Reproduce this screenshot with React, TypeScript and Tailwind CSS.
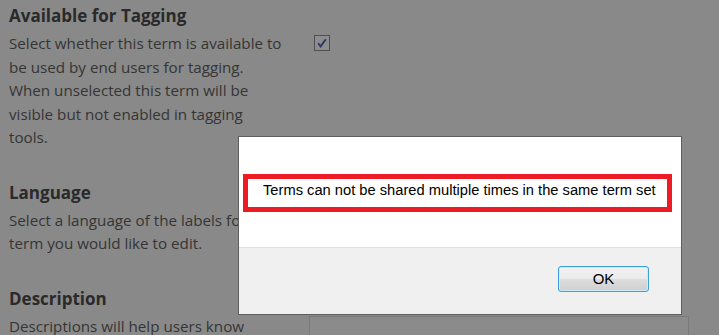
import React from "react";

const Line = ({ children }: { children: React.ReactNode }) => (
  <div className="h-[23.5px] leading-[23.5px] whitespace-nowrap">{children}</div>
);

export default function App() {
  return (
    <div className="relative w-[719px] h-[335px] overflow-hidden bg-[#898989] font-['Open_Sans',sans-serif] text-[#353535]">
      <div className="flex flex-col pl-[9px] pt-[4px]">
        {/* Section 1 */}
        <section className="flex flex-col">
          <h2 className="h-[24px] leading-[24px] text-[17px] font-bold text-[#2a2a2a] whitespace-nowrap">
            Available for Tagging
          </h2>
          <div className="mt-[4px] flex">
            <div className="w-[300px] text-[15.2px]">
              <Line>Select whether this term is available to</Line>
              <Line>be used by end users for tagging.</Line>
              <Line>When unselected this term will be</Line>
              <Line>visible but not enabled in tagging</Line>
              <Line>tools.</Line>
            </div>
            <div className="pl-[5px] pt-[3px]">
              <div className="w-[16px] h-[16px] border border-[#4f4f4f] bg-[#8d8d8d] flex items-center justify-center">
                <svg width="12" height="12" viewBox="0 0 12 12">
                  <path d="M2.2 6.2 L4.6 9.4 L9.8 2.2" fill="none" stroke="#2c3566" strokeWidth="1.8" />
                </svg>
              </div>
            </div>
          </div>
        </section>

        {/* Section 2 */}
        <section className="flex flex-col mt-[31px]">
          <h2 className="h-[24px] leading-[24px] text-[17px] font-bold text-[#2a2a2a] whitespace-nowrap">
            Language
          </h2>
          <div className="mt-[4px] flex">
            <div className="w-[300px] text-[15.2px]">
              <Line>Select a language of the labels for the</Line>
              <Line>term you would like to edit.</Line>
            </div>
          </div>
        </section>

        {/* Section 3 */}
        <section className="flex flex-col mt-[31px]">
          <h2 className="h-[24px] leading-[24px] text-[17px] font-bold text-[#2a2a2a] whitespace-nowrap">
            Description
          </h2>
          <div className="mt-[4px] flex">
            <div className="w-[300px] text-[15.2px]">
              <Line>Descriptions will help users know</Line>
              <Line>when to use this term.</Line>
            </div>
            <div className="pt-[1px]">
              <div className="w-[380px] h-[80px] border border-[#7a7a7a] bg-[#8b8b8b]" />
            </div>
          </div>
        </section>
      </div>

      {/* Dialog */}
      <div className="absolute left-[238px] top-[136px] w-[444px] h-[179px] border border-[#5f5f5f] bg-white flex flex-col font-['Liberation_Sans',Arial,sans-serif] text-black">
        <div className="h-[110px] pt-[37px] pl-[4px] pr-[9px]">
          <div className="h-[38px] border-[5px] border-[#ed1c24] pl-[15px] pt-[3px] text-[14.7px] leading-[17px] whitespace-nowrap">
            Terms can not be shared multiple times in the same term set
          </div>
        </div>
        <div className="flex-1 border-t border-[#dfdfdf] bg-[#f0f0f0] flex justify-end items-start pt-[18px] pr-[32px]">
          <button className="w-[91px] h-[26px] rounded-[3px] border border-[#3aa0dc] shadow-[inset_0_0_0_1px_#c8ecfc] bg-[linear-gradient(to_bottom,#f2f2f2_0%,#ebebeb_50%,#dddddd_50%,#cfcfcf_100%)] text-[15px] leading-[24px] text-black">
            OK
          </button>
        </div>
      </div>
    </div>
  );
}
